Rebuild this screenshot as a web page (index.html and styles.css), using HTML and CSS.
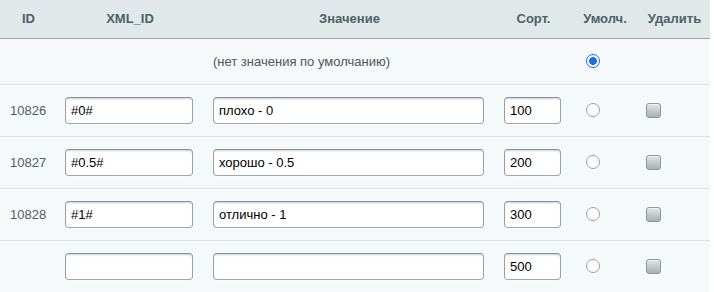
FILE: index.html
```html
<!DOCTYPE html>
<html lang="ru">
<head>
    <meta charset="UTF-8">
    <title>Значения свойства</title>
    <link rel="stylesheet" href="styles.css">
</head>
<body>
    <table class="values">
        <colgroup>
            <col class="c-id">
            <col class="c-xml">
            <col class="c-val">
            <col class="c-sort">
            <col class="c-def">
            <col class="c-del">
        </colgroup>
        <thead>
            <tr>
                <th>ID</th>
                <th>XML_ID</th>
                <th>Значение</th>
                <th>Сорт.</th>
                <th>Умолч.</th>
                <th>Удалить</th>
            </tr>
        </thead>
        <tbody>
            <tr class="row-default">
                <td></td>
                <td></td>
                <td class="note">(нет значения по умолчанию)</td>
                <td></td>
                <td class="center-pad"><input type="radio" name="def" class="radio" checked></td>
                <td></td>
            </tr>
            <tr>
                <td class="id">10826</td>
                <td><input type="text" class="field field-xml" value="#0#"></td>
                <td><input type="text" class="field field-val" value="плохо - 0"></td>
                <td><input type="text" class="field field-sort" value="100"></td>
                <td class="center-pad"><input type="radio" name="def" class="radio"></td>
                <td class="del-pad"><input type="checkbox" class="check"></td>
            </tr>
            <tr>
                <td class="id">10827</td>
                <td><input type="text" class="field field-xml" value="#0.5#"></td>
                <td><input type="text" class="field field-val" value="хорошо - 0.5"></td>
                <td><input type="text" class="field field-sort" value="200"></td>
                <td class="center-pad"><input type="radio" name="def" class="radio"></td>
                <td class="del-pad"><input type="checkbox" class="check"></td>
            </tr>
            <tr>
                <td class="id">10828</td>
                <td><input type="text" class="field field-xml" value="#1#"></td>
                <td><input type="text" class="field field-val" value="отлично - 1"></td>
                <td><input type="text" class="field field-sort" value="300"></td>
                <td class="center-pad"><input type="radio" name="def" class="radio"></td>
                <td class="del-pad"><input type="checkbox" class="check"></td>
            </tr>
            <tr>
                <td class="id"></td>
                <td><input type="text" class="field field-xml" value=""></td>
                <td><input type="text" class="field field-val" value=""></td>
                <td><input type="text" class="field field-sort" value="500"></td>
                <td class="center-pad"><input type="radio" name="def" class="radio"></td>
                <td class="del-pad"><input type="checkbox" class="check"></td>
            </tr>
        </tbody>
    </table>
</body>
</html>
```

FILE: styles.css
```css
* {
    margin: 0;
    padding: 0;
    box-sizing: border-box;
}
body {
    background-color: #fff;
    font-family: "Liberation Sans", Arial, sans-serif;
    font-size: 13px;
    color: #535c69;
}
.values {
    width: 710px;
    table-layout: fixed;
    border-collapse: collapse;
    background-color: #f5f9f9;
}
.c-id { width: 55px; }
.c-xml { width: 148px; }
.c-val { width: 291px; }
.c-sort { width: 77px; }
.c-def { width: 66px; }
.c-del { width: 73px; }

th {
    height: 38px;
    background-color: #e0e8ea;
    color: #4b6267;
    font-weight: bold;
    text-align: center;
    vertical-align: middle;
    border-bottom: 1px solid #a0a8aa;
    padding: 0 0 1px 2px;
}
td {
    height: 52px;
    padding: 0 0 0 10px;
    vertical-align: middle;
    border-bottom: 1px solid #dce0e1;
}
.row-default td {
    height: 46px;
    border-top: 1px solid #d9dfe0;
}
.note {
    color: #555;
}
.id {
    color: #535c69;
}

/* text inputs */
.field {
    display: block;
    height: 27px;
    padding: 0 5px;
    border: 1px solid;
    border-color: #87919c #959ea9 #9ea7b1 #959ea9;
    border-radius: 4px;
    background-color: #fff;
    box-shadow: 0 1px 0 0 rgba(255, 255, 255, 0.3), inset 0 2px 2px -1px rgba(180, 188, 191, 0.7);
    font-family: "Liberation Sans", Arial, sans-serif;
    font-size: 13px;
    color: #000;
    outline: none;
}
.field-xml { width: 128px; }
.field-val { width: 271px; }
.field-sort { width: 57px; }

/* radio */
.center-pad {
    padding-left: 15px;
}
.radio {
    -webkit-appearance: none;
    appearance: none;
    display: block;
    width: 14px;
    height: 14px;
    border: 1px solid #9a9ea6;
    border-radius: 50%;
    background-color: #fff;
}
.radio:checked {
    border: 1.5px solid #1a6fe6;
    background: radial-gradient(circle, #1a6fe6 0, #1a6fe6 3.6px, #fff 4.2px);
}

/* checkbox */
.del-pad {
    padding-left: 9px;
}
.check {
    -webkit-appearance: none;
    appearance: none;
    display: block;
    width: 15px;
    height: 15px;
    border: 1px solid #8f9699;
    border-radius: 3px;
    background: linear-gradient(#e1e4e5, #aab0b2);
    box-shadow: inset 0 1px 0 rgba(255, 255, 255, 0.6);
}
```
